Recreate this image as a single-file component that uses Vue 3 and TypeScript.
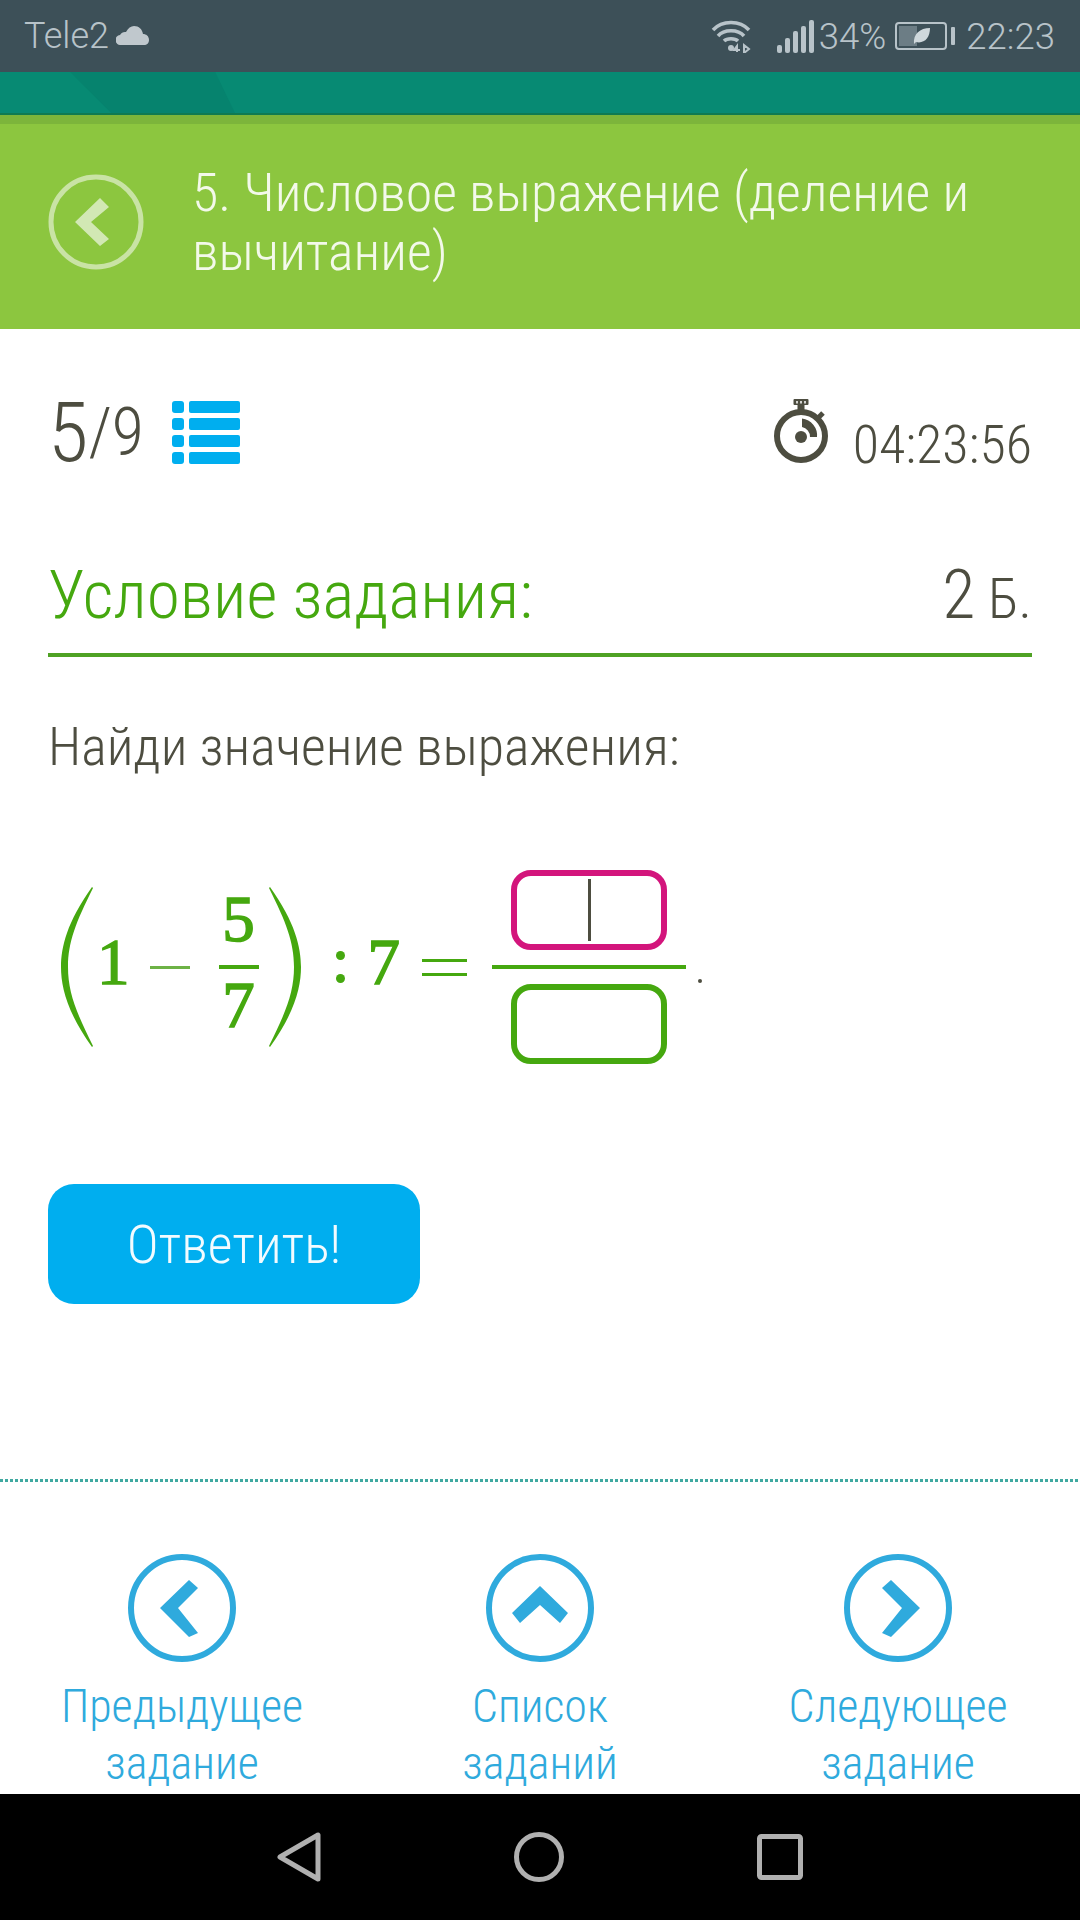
<script setup lang="ts">
const navItems = [
  { lines: ['Предыдущее', 'задание'], points: '32,54 61,26 70,34 50,54 70,79 61,83' },
  { lines: ['Список', 'заданий'], points: '54,32 82,59 74,69 54,51 34,69 26,59' },
  { lines: ['Следующее', 'задание'], points: '76,54 47,26 38,34 58,54 38,79 47,83' },
]
</script>

<template>
  <div class="page">
    <div class="status">
      <span class="carrier">Tele2</span>
      <svg class="cloud" width="33" height="19" viewBox="0 0 33 19"><path d="M5 19a5 5 0 0 1-1-10 6 6 0 0 1 6-3C12 2 15 0 18 0c5 0 8 3 9 8 3 0 6 2 6 6 0 3-2 5-5 5z" fill="#c0c8cd" /></svg>
      <span class="status-spacer"></span>
      <svg class="wifi" width="40" height="34" viewBox="0 0 40 34" fill="none" stroke="#b8c3c9" stroke-width="3.500">
        <path d="M2 11C11 1 29 1 38 11" />
        <path d="M7 17C13 10 27 10 33 17" />
        <path d="M13 22C16 19 24 19 27 22" />
        <circle cx="20" cy="29" r="3" fill="#b8c3c9" stroke="none" />
        <path d="M26 33v-6l-3 4h6M33 26v8l5-4z" stroke-width="2" />
      </svg>
      <div class="signal">
        <i v-for="h in [8, 15, 22, 27, 33]" :key="h" :style="{ height: h + 'px' }"></i>
      </div>
      <span class="percent">34%</span>
      <div class="battery">
        <div class="battery-fill"></div>
        <svg class="leaf" width="18" height="18" viewBox="0 0 18 18"><path d="M1 17C0 7 7 1 17 1 17 11 11 17 3 15z" fill="#cfd8dc" /></svg>
      </div>
      <div class="battery-tip"></div>
      <span class="clock">22:23</span>
    </div>
    <div class="teal"><div class="teal-shape"></div></div>
    <div class="olive"></div>
    <div class="head">
      <svg class="back" width="96" height="96" viewBox="0 0 96 96">
        <circle cx="48" cy="48" r="45" fill="none" stroke="#c9e3a5" stroke-width="5" />
        <polygon points="27,48 52,24 61,33 43,48 61,65 52,72" fill="#d2e8b4" />
      </svg>
      <div class="title">5. Числовое выражение (деление и<br />вычитание)</div>
    </div>

    <main class="main">
      <div class="counter">
        <span class="num">5</span><span class="den">/9</span>
        <svg class="list" width="68" height="63" viewBox="0 0 68 63" fill="#00aeef">
          <template v-for="y in [0, 17, 34, 51]" :key="y">
            <rect x="0" :y="y" width="12" height="12" rx="3" />
            <rect x="17" :y="y" width="51" height="12" rx="2" />
          </template>
        </svg>
        <span class="status-spacer"></span>
        <svg class="watch" width="56" height="66" viewBox="0 0 56 66" fill="#4d4d40">
          <rect x="20.500" y="1" width="15" height="6" rx="1" />
          <path d="M24 3v2.500M28 3v2.500M32 3v2.500" stroke="#fff" stroke-width="1.500" />
          <rect x="24.500" y="7" width="7" height="7" />
          <rect x="45" y="14" width="5" height="7" transform="rotate(45 47.500 17.500)" />
          <circle cx="28" cy="38" r="24" fill="none" stroke="#4d4d40" stroke-width="6" />
          <circle cx="28" cy="39" r="6" />
          <path d="M29 20.500a17 17 0 0 1 15 18.500h-7a10 10 0 0 0-8-10z" />
        </svg>
        <span class="time">04:23:56</span>
      </div>

      <div class="task-head">
        <span class="task-title">Условие задания:</span>
        <span class="score"><b>2</b> Б.</span>
      </div>

      <p class="question">Найди значение выражения:</p>

      <div class="math">
        <svg class="paren" width="32" height="160" viewBox="0 0 32 160"><path d="M31 0C6 35 0 60 0 80s6 45 31 80l1-1C15 125 7 105 7 80S15 35 32 1z" fill="#45a80f" /></svg>
        <span class="digit one">1</span>
        <span class="minus"></span>
        <span class="frac">
          <span class="digit">5</span>
          <span class="frac-bar"></span>
          <span class="digit">7</span>
        </span>
        <svg class="paren right" width="32" height="160" viewBox="0 0 32 160"><path d="M1 0C26 35 32 60 32 80s-6 45-31 80l-1-1C17 125 25 105 25 80S17 35 0 1z" fill="#45a80f" /></svg>
        <span class="colon"><i></i><i></i></span>
        <span class="digit seven">7</span>
        <span class="equals"><i></i><i></i></span>
        <span class="answer">
          <span class="box active"><i class="caret"></i></span>
          <span class="answer-bar"></span>
          <span class="box"></span>
        </span>
        <span class="dot"></span>
      </div>

      <button class="submit">Ответить!</button>
    </main>

    <div class="dotted"></div>
    <nav class="nav">
      <div v-for="item in navItems" :key="item.lines[0]" class="nav-item">
        <svg width="108" height="108" viewBox="0 0 108 108">
          <circle cx="54" cy="54" r="51" fill="none" stroke="#2faadd" stroke-width="6" />
          <polygon :points="item.points" fill="#2faadd" />
        </svg>
        <div class="nav-label">{{ item.lines[0] }}<br />{{ item.lines[1] }}</div>
      </div>
    </nav>

    <div class="system">
      <svg width="44" height="50" viewBox="0 0 44 50" fill="none" stroke="#b0b0b0" stroke-width="5" stroke-linejoin="round"><path d="M41 3v44L3 25z" /></svg>
      <svg width="50" height="50" viewBox="0 0 50 50" fill="none" stroke="#b0b0b0" stroke-width="5"><circle cx="25" cy="25" r="22.500" /></svg>
      <svg width="46" height="46" viewBox="0 0 46 46" fill="none" stroke="#b0b0b0" stroke-width="5" stroke-linejoin="round"><rect x="2.500" y="2.500" width="41" height="41" rx="2" /></svg>
    </div>
  </div>
</template>

<style>
body {
  margin: 0;
  background: #fff;
}
</style>

<style scoped>
.page {
  width: 1080px;
  height: 1920px;
  display: flex;
  flex-direction: column;
  overflow: hidden;
  font-family: Roboto, 'Noto Sans', sans-serif;
  font-weight: 300;
  font-stretch: 75%;
  color: #4d4d40;
  background: #fff;
}

.status {
  height: 72px;
  flex: none;
  display: flex;
  align-items: center;
  padding: 0 25px 0 24px;
  box-sizing: border-box;
  background: #3d5058;
  color: #b8c3c9;
  font-size: 36.500px;
  font-weight: 350;
  font-stretch: 100%;
}

.carrier {
  font-size: 36px;
}

.cloud {
  margin-left: 7px;
  margin-bottom: 1px;
}

.status-spacer {
  flex: 1;
}

.signal {
  display: flex;
  align-items: flex-end;
  gap: 3px;
  height: 34px;
  margin-left: 26px;
}

.signal i {
  width: 5px;
  border-radius: 2px;
  background: #b8c3c9;
}

.percent {
  margin-left: 5px;
}

.battery {
  position: relative;
  width: 52px;
  height: 28px;
  margin-left: 9px;
  box-sizing: border-box;
  border: 2px solid #b8c3c9;
  border-radius: 4px;
  padding: 2px;
}

.battery-fill {
  width: 18px;
  height: 100%;
  background: #6c7d85;
}

.leaf {
  position: absolute;
  left: 16px;
  top: 3px;
}

.battery-tip {
  width: 4px;
  height: 18px;
  margin-left: 4px;
  border-radius: 1px;
  background: #b8c3c9;
}

.clock {
  margin-left: 11px;
}

.teal {
  height: 43px;
  flex: none;
  position: relative;
  background: #078a73;
  border-bottom: 2px solid #0f7a52;
  box-sizing: border-box;
}

.teal-shape {
  position: absolute;
  left: 70px;
  top: 0;
  width: 165px;
  height: 100%;
  background: #06836e;
  clip-path: polygon(0 0, 88% 0, 100% 100%, 25% 100%);
}

.olive {
  height: 9px;
  flex: none;
  background: #7cb53b;
}

.head {
  height: 205px;
  flex: none;
  display: flex;
  align-items: center;
  padding: 0 0 10px 48px;
  gap: 48px;
  box-sizing: border-box;
  background: #8cc63f;
}

.back {
  flex: none;
}

.title {
  font-size: 54px;
  line-height: 59px;
  color: #f3f9ea;
}

.main {
  flex: 1;
  padding: 0 48px;
}

.counter {
  display: flex;
  align-items: flex-end;
  height: 66px;
  margin-top: 71px;
}

.num {
  font-size: 83px;
  line-height: 66px;
}

.den {
  font-size: 66px;
  line-height: 66px;
}

.list {
  margin: 0 0 2px 28px;
}

.watch {
  margin: 0 24px 2px 0;
}

.time {
  font-size: 54px;
  line-height: 48px;
  margin-bottom: -3px;
}

.task-head {
  display: flex;
  justify-content: space-between;
  align-items: baseline;
  height: 98px;
  margin-top: 89px;
  border-bottom: 4px solid #4fa224;
}

.task-title {
  font-size: 67.500px;
  line-height: 80px;
  color: #45a80f;
}

.score {
  font-size: 56px;
}

.score b {
  font-size: 68px;
  font-weight: 300;
}

.question {
  margin: 58px 0 0;
  font-size: 54px;
  line-height: 64px;
}

.math {
  display: flex;
  align-items: center;
  height: 194px;
  margin-top: 91px;
  padding-left: 13px;
  font-family: 'Liberation Serif', serif;
  font-weight: 400;
  font-stretch: 100%;
  color: #45a80f;
  -webkit-text-stroke: 1.500px #45a80f;
}

.digit {
  font-size: 65px;
  line-height: 36px;
  height: 46px;
  display: block;
}

.one {
  margin-left: 4px;
}

.minus {
  width: 40px;
  height: 3px;
  margin-left: 20px;
  background: #6db246;
}

.frac {
  width: 40px;
  margin-left: 29px;
  display: flex;
  flex-direction: column;
  align-items: center;
  gap: 18px;
}

.frac-bar {
  width: 100%;
  height: 4px;
  background: #45a80f;
}

.right {
  margin-left: 10px;
}

.colon {
  margin-left: 35px;
  display: flex;
  flex-direction: column;
  gap: 14px;
}

.colon i {
  width: 9px;
  height: 9px;
  border-radius: 50%;
  background: #45a80f;
}

.seven {
  margin-left: 23px;
}

.equals {
  margin-left: 22px;
  display: flex;
  flex-direction: column;
  gap: 11px;
}

.equals i {
  width: 45px;
  height: 3px;
  background: #45a80f;
}

.answer {
  width: 194px;
  margin-left: 25px;
  display: flex;
  flex-direction: column;
  align-items: center;
  gap: 15px;
}

.answer-bar {
  width: 100%;
  height: 4px;
  background: #45a80f;
}

.box {
  width: 156px;
  height: 80px;
  box-sizing: border-box;
  border: 6px solid #45a80f;
  border-radius: 20px;
  display: flex;
  justify-content: center;
  align-items: center;
}

.box.active {
  border-color: #d3157c;
}

.caret {
  width: 3px;
  height: 62px;
  background: #4d4d40;
}

.dot {
  width: 4px;
  height: 4px;
  margin: 28px 0 0 12px;
  border-radius: 50%;
  background: #4d4d40;
}

.submit {
  display: block;
  width: 372px;
  height: 120px;
  margin-top: 120px;
  border: 0;
  border-radius: 26px;
  background: #00aeef;
  color: #f2fbff;
  font: inherit;
  font-size: 54px;
}

.dotted {
  height: 3px;
  flex: none;
  margin-bottom: 72px;
  background: repeating-linear-gradient(90deg, #3fa9a0 0 3px, transparent 3px 5px);
}

.nav {
  height: 240px;
  flex: none;
  display: flex;
  justify-content: center;
  gap: 0;
  padding: 0 2px;
}

.nav-item {
  width: 358px;
  display: flex;
  flex-direction: column;
  align-items: center;
}

.nav-label {
  margin-top: 16px;
  font-size: 46px;
  line-height: 57px;
  text-align: center;
  color: #2faadd;
}

.system {
  height: 126px;
  flex: none;
  display: flex;
  align-items: center;
  justify-content: center;
  gap: 193px;
  background: #000;
}
</style>
